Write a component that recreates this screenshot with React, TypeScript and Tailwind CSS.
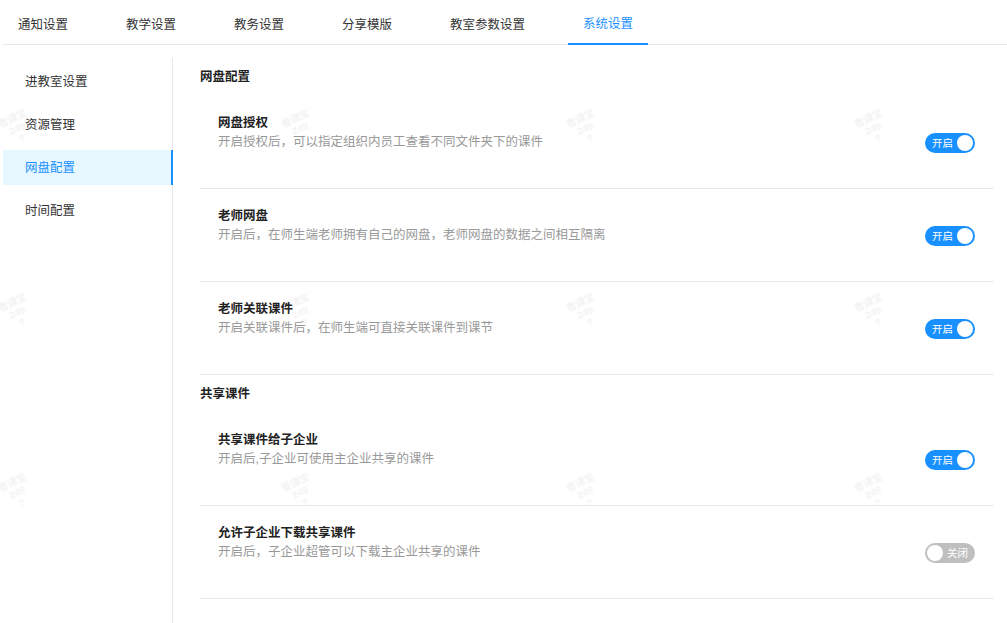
import React from "react";

const tabs = ["通知设置", "教学设置", "教务设置", "分享模版", "教室参数设置", "系统设置"];
const menu = ["进教室设置", "资源管理", "网盘配置", "时间配置"];

type Setting = { title: string; desc: string; on: boolean };

const groups: { name: string; items: Setting[] }[] = [
  {
    name: "网盘配置",
    items: [
      { title: "网盘授权", desc: "开启授权后，可以指定组织内员工查看不同文件夹下的课件", on: true },
      { title: "老师网盘", desc: "开启后，在师生端老师拥有自己的网盘，老师网盘的数据之间相互隔离", on: true },
      { title: "老师关联课件", desc: "开启关联课件后，在师生端可直接关联课件到课节", on: true },
    ],
  },
  {
    name: "共享课件",
    items: [
      { title: "共享课件给子企业", desc: "开启后,子企业可使用主企业共享的课件", on: true },
      { title: "允许子企业下载共享课件", desc: "开启后，子企业超管可以下载主企业共享的课件", on: false },
    ],
  },
];

const marks = [
  [2, 112], [285, 112], [570, 112], [858, 112],
  [2, 296], [285, 296], [570, 296], [858, 296],
  [2, 476], [285, 476], [570, 476], [858, 476],
];

const Toggle = ({ on }: { on: boolean }) => {
  if (on) {
    return (
      <div className="flex items-center h-[20px] w-[50px] rounded-full bg-[#1890ff] pl-[7px] pr-[2px]">
        <span className="text-[10.5px] leading-none text-white">开启</span>
        <span className="ml-auto h-[16px] w-[16px] rounded-full bg-white" />
      </div>
    );
  }
  return (
    <div className="flex items-center h-[20px] w-[50px] rounded-full bg-[#bfbfbf] pl-[2px] pr-[7px]">
      <span className="h-[16px] w-[16px] rounded-full bg-white" />
      <span className="ml-auto text-[10.5px] leading-none text-white">关闭</span>
    </div>
  );
};

export default function App() {
  return (
    <div
      className="relative h-[623px] w-[1007px] overflow-hidden bg-white pl-[3px] text-[12.5px] text-[#333]"
      style={{ fontFamily: '"Liberation Sans", "Noto Sans CJK SC", sans-serif' }}
    >
      {/* watermark, sits under the page */}
      {marks.map(([x, y], i) => (
        <div
          key={i}
          className="pointer-events-none absolute flex -rotate-[25deg] flex-col items-center text-[10px] font-bold leading-[11px] text-[#f4f4f4]"
          style={{ left: x, top: y }}
        >
          <span>看课宝</span>
          <span>249</span>
          <span>?</span>
        </div>
      ))}

      <div className="relative">
        {/* top tabs */}
        <div className="flex h-[45px] gap-[28px] border-b border-[#e8e8e8]">
          {tabs.map((t, i) => (
            <div
              key={t}
              className={
                i === tabs.length - 1
                  ? "-mb-px flex items-center border-b-2 border-[#1890ff] px-[15px] pt-[6px] text-[#1890ff]"
                  : "flex items-center px-[15px] pt-[6px] text-[#333]"
              }
            >
              {t}
            </div>
          ))}
        </div>

        <div className="mt-[13px] flex h-[565px]">
          {/* side menu */}
          <div className="flex w-[170px] flex-col gap-[8px] border-r border-[#e8e8e8] pt-[6px]">
            {menu.map((m, i) => (
              <div
                key={m}
                className={
                  i === 2
                    ? "-mr-px flex h-[35px] items-center border-r-2 border-[#1890ff] bg-[#e6f7ff] pl-[22px] pt-[2px] text-[#1890ff]"
                    : "flex h-[35px] items-center pl-[22px] pt-[2px] text-[#333]"
                }
              >
                {m}
              </div>
            ))}
          </div>

          {/* settings */}
          <div className="flex-1 pl-[27px] pr-[13px]">
            {groups.map((g) => (
              <div key={g.name}>
                <div className="flex h-[38px] items-center font-bold text-[#222]">{g.name}</div>
                {g.items.map((s) => (
                  <div key={s.title} className="flex h-[93px] items-start border-b border-[#e8e8e8] pl-[18px] pr-[19px]">
                    <div className="pt-[19px]">
                      <div className="font-bold leading-[16px] text-[#222]">{s.title}</div>
                      <div className="mt-[3px] leading-[16px] text-[#999]">{s.desc}</div>
                    </div>
                    <div className="ml-auto mt-[37px]">
                      <Toggle on={s.on} />
                    </div>
                  </div>
                ))}
              </div>
            ))}
          </div>
        </div>
      </div>
    </div>
  );
}
